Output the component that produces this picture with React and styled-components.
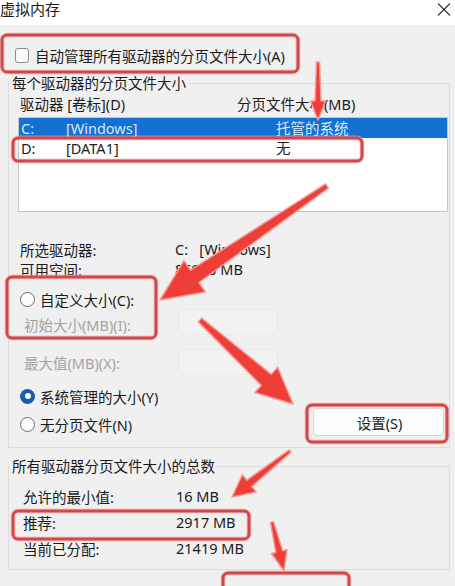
import React from "react";
import styled, { createGlobalStyle } from "styled-components";

const GlobalStyle = createGlobalStyle`
  html, body { margin: 0; padding: 0; background: #f0f0f0; }
  * { box-sizing: border-box; }
`;

const Window = styled.div`
  position: relative;
  width: 455px;
  height: 586px;
  overflow: hidden;
  background: #f0f0f0;
  color: #1b1b1b;
  font-family: "Segoe UI", "Noto Sans", "Noto Sans CJK SC", sans-serif;
  font-size: 14.5px;
`;

const TitleBar = styled.div`
  height: 25px;
  background: #ffffff;
  display: flex;
  justify-content: space-between;
  align-items: flex-start;
  padding: 0 4px 0 0;
`;

const Title = styled.div`
  margin-left: 0;
  font-size: 15px;
  line-height: 19px;
`;

const CloseIcon = styled.svg`
  margin-top: 3px;
  width: 14px;
  height: 13px;
`;

const Body = styled.div`
  padding: 0 5px 0 8px;
`;

const CheckRow = styled.label`
  display: flex;
  align-items: center;
  height: 22px;
  margin-top: 19px;
  padding-left: 7px;
  gap: 6px;
`;

const CheckBox = styled.span`
  width: 14px;
  height: 15px;
  border: 1px solid #8c8c8c;
  border-radius: 3px;
  background: #fbfbfb;
`;

const Group = styled.fieldset`
  margin: ${(p) => p.$top}px 0 0 0;
  padding: 0 0 ${(p) => p.$bottom}px 0;
  border: 1px solid #dcdcdc;
  min-width: 0;
  width: 442px;
`;

const GroupTitle = styled.legend`
  margin-left: 1px;
  padding: 0 2px;
  line-height: 16px;
  color: #1b1b1b;
`;

const ColumnHeader = styled.div`
  display: grid;
  grid-template-columns: 217px auto;
  margin: 3px 0 0 11px;
  line-height: 20px;
`;

const DriveList = styled.div`
  margin: 3px 1px 0 9px;
  height: 95px;
  background: #ffffff;
  border: 1px solid #c6c6c6;
`;

const DriveRow = styled.div`
  display: grid;
  grid-template-columns: 45px 210px auto;
  height: 20px;
  line-height: 20px;
  padding-left: 2px;
  background: ${(p) => (p.$selected ? "#1470d2" : "transparent")};
  color: ${(p) => (p.$selected ? "#d9e9fd" : "#1b1b1b")};
  white-space: pre;
`;

const InfoGrid = styled.div`
  display: grid;
  grid-template-columns: ${(p) => p.$col}px auto;
  grid-auto-rows: ${(p) => p.$row}px;
  align-items: center;
  margin: ${(p) => p.$top}px 0 0 ${(p) => p.$left}px;
  white-space: pre;
`;

const RadioRow = styled.label`
  display: flex;
  align-items: center;
  gap: 5px;
  height: 20px;
  margin: ${(p) => p.$top || 0}px 0 0 11px;
`;

const Radio = styled.span`
  position: relative;
  width: 15px;
  height: 15px;
  border-radius: 50%;
  border: ${(p) => (p.$checked ? "none" : "1px solid #6f6f6f")};
  background: ${(p) => (p.$checked ? "#1a5cab" : "#fbfbfb")};
  &::after {
    content: "";
    display: ${(p) => (p.$checked ? "block" : "none")};
    position: absolute;
    left: 4.5px;
    top: 4.5px;
    width: 6px;
    height: 6px;
    border-radius: 50%;
    background: #ffffff;
  }
`;

const FieldRow = styled.div`
  display: grid;
  grid-template-columns: 154px 100px;
  height: 26px;
  margin: ${(p) => p.$top}px 0 0 15px;
`;

const FieldLabel = styled.span`
  color: #a3a3a3;
  line-height: 20px;
  padding-top: ${(p) => p.$pad}px;
`;

const TextInput = styled.div`
  height: 26px;
  border: 1px solid #e9e9e9;
  background: #f2f2f2;
  border-radius: 3px;
`;

const FooterRow = styled.div`
  display: flex;
  justify-content: space-between;
  align-items: center;
  margin-top: 2px;
  padding-right: 5px;
`;

const Button = styled.button`
  width: 131px;
  height: 28px;
  border: 1px solid #d6d6d6;
  border-radius: 4px;
  background: #fdfdfd;
  font: inherit;
  color: #1b1b1b;
  padding: 0 0 0 2px;
`;

function arrowPoints(x1, y1, x2, y2, tw, sw, hw, hl) {
  const dx = x2 - x1;
  const dy = y2 - y1;
  const L = Math.hypot(dx, dy);
  const ux = dx / L;
  const uy = dy / L;
  const nx = -uy;
  const ny = ux;
  const bx = x1 + ux * (L - hl);
  const by = y1 + uy * (L - hl);
  const pts = [
    [x1 + (nx * tw) / 2, y1 + (ny * tw) / 2],
    [bx + (nx * sw) / 2, by + (ny * sw) / 2],
    [bx + (nx * hw) / 2, by + (ny * hw) / 2],
    [x2, y2],
    [bx - (nx * hw) / 2, by - (ny * hw) / 2],
    [bx - (nx * sw) / 2, by - (ny * sw) / 2],
    [x1 - (nx * tw) / 2, y1 - (ny * tw) / 2],
  ];
  return pts.map((p) => p.map((v) => v.toFixed(1)).join(",")).join(" ");
}

const Overlay = styled.svg`
  position: absolute;
  left: 0;
  top: 0;
  width: 455px;
  height: 586px;
  pointer-events: none;
`;

const arrows = [
  [318, 62, 318, 120, 3, 6, 15, 19],
  [327, 186, 160, 300, 5, 15, 38, 42],
  [200, 320, 293, 404, 5, 15, 34, 36],
  [290, 451, 232, 497, 3, 8, 22, 22],
  [272, 522, 284, 571, 3, 7, 16, 20],
];

const boxes = [
  [2, 35, 296, 37],
  [13, 138, 349, 23],
  [7, 277, 149, 61],
  [307, 405, 140, 37],
  [13, 511, 236, 28],
  [223, 573, 126, 30],
];

function Annotations() {
  return (
    <Overlay viewBox="0 0 455 586">
      {boxes.map(([x, y, w, h], i) => (
        <g key={"b" + i}>
          <rect x={x} y={y} width={w} height={h} rx="5" fill="none" stroke="#f2b3b3" strokeWidth="5" opacity="0.6" />
          <rect x={x} y={y} width={w} height={h} rx="5" fill="none" stroke="#d4464a" strokeWidth="3" />
        </g>
      ))}
      {arrows.map((a, i) => (
        <polygon
          key={"a" + i}
          points={arrowPoints(...a)}
          fill="#ee3e38"
          stroke="#f69a95"
          strokeWidth="1.5"
          strokeLinejoin="round"
        />
      ))}
    </Overlay>
  );
}

export default function App() {
  return (
    <Window>
      <GlobalStyle />
      <TitleBar>
        <Title>虚拟内存</Title>
        <CloseIcon viewBox="0 0 14 13">
          <path d="M1 0.5 L13 12.5 M13 0.5 L1 12.5" stroke="#333" strokeWidth="1.1" fill="none" />
        </CloseIcon>
      </TitleBar>
      <Body>
        <CheckRow>
          <CheckBox />
          <span>自动管理所有驱动器的分页文件大小(A)</span>
        </CheckRow>

        <Group $top={9} $bottom={11}>
          <GroupTitle>每个驱动器的分页文件大小</GroupTitle>
          <ColumnHeader>
            <span>驱动器 [卷标](D)</span>
            <span>分页文件大小(MB)</span>
          </ColumnHeader>
          <DriveList>
            <DriveRow $selected>
              <span>C:</span>
              <span>[Windows]</span>
              <span>托管的系统</span>
            </DriveRow>
            <DriveRow>
              <span>D:</span>
              <span>[DATA1]</span>
              <span>无</span>
            </DriveRow>
          </DriveList>

          <InfoGrid $col={155} $row={20} $top={27} $left={11}>
            <span>所选驱动器:</span>
            <span>C:   [Windows]</span>
            <span>可用空间:</span>
            <span>85920 MB</span>
          </InfoGrid>

          <RadioRow $top={10}>
            <Radio />
            <span>自定义大小(C):</span>
          </RadioRow>
          <FieldRow $top={0}>
            <FieldLabel $pad={6}>初始大小(MB)(I):</FieldLabel>
            <TextInput />
          </FieldRow>
          <FieldRow $top={14}>
            <FieldLabel $pad={4}>最大值(MB)(X):</FieldLabel>
            <TextInput />
          </FieldRow>

          <RadioRow $top={11}>
            <Radio $checked />
            <span>系统管理的大小(Y)</span>
          </RadioRow>
          <FooterRow>
            <RadioRow $top={4}>
              <Radio />
              <span>无分页文件(N)</span>
            </RadioRow>
            <Button>设置(S)</Button>
          </FooterRow>
        </Group>

        <Group $top={10} $bottom={8}>
          <GroupTitle>所有驱动器分页文件大小的总数</GroupTitle>
          <InfoGrid $col={153} $row={26} $top={9} $left={14}>
            <span>允许的最小值:</span>
            <span>16 MB</span>
            <span>推荐:</span>
            <span>2917 MB</span>
            <span>当前已分配:</span>
            <span>21419 MB</span>
          </InfoGrid>
        </Group>
      </Body>
      <Annotations />
    </Window>
  );
}
